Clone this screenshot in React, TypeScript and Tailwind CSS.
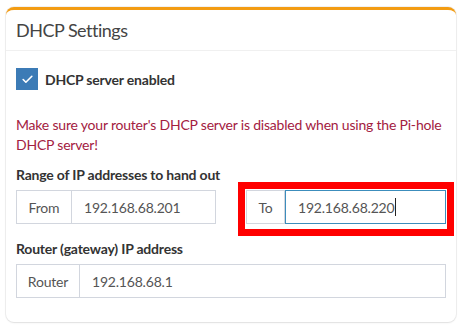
import { Check } from "lucide-react";

const font = { fontFamily: '"Source Sans Pro", Lato, "Noto Sans", sans-serif' };

function Addon({ label, width }: { label: string; width: string }) {
  return (
    <span
      className={`flex items-center justify-center shrink-0 border border-[#d2d6de] bg-white text-[14px] text-[#555] ${width}`}
    >
      {label}
    </span>
  );
}

export default function App() {
  return (
    <div className="w-[467px] h-[336px] bg-white pt-[7px] pl-[6px] tracking-[-0.2px]" style={font}>
      <div className="w-[450px] rounded-[8px] border-t-[3px] border-[#f39c12] bg-white shadow-[0_1px_2px_rgba(0,0,0,0.08),0_0_0_1px_#f2f2f2]">
        <div className="h-[41px] border-b border-[#f0f0f0] px-[10px] flex items-center">
          <h3 className="text-[18px] text-[#444] leading-none tracking-[-0.5px]">DHCP Settings</h3>
        </div>

        <div className="px-[10px] pt-[17px] pb-[24px] text-[14px] text-[#333]">
          <label className="flex items-center gap-[7px] h-[22px]">
            <span className="flex h-[22px] w-[22px] items-center justify-center bg-[#3c7bb6]">
              <Check className="h-[13px] w-[13px] text-white" strokeWidth={3} />
            </span>
            <span className="font-bold">DHCP server enabled</span>
          </label>

          <p className="mt-[25px] leading-[20px] text-[#a3203f]">
            Make sure your router's DHCP server is disabled when using the Pi-hole DHCP server!
          </p>

          <p className="mt-[10px] font-bold leading-[20px]">Range of IP addresses to hand out</p>
          <div className="mt-[5px] grid grid-cols-2 gap-[30px]">
            <div className="flex h-[34px]">
              <Addon label="From" width="w-[56px]" />
              <div className="flex flex-1 items-center border border-l-0 border-[#d2d6de] px-[12px] text-[#555]">
                192.168.68.201
              </div>
            </div>
            <div className="relative">
              <div className="flex h-[34px]">
                <Addon label="To" width="w-[39px]" />
                <div className="flex flex-1 items-center border border-[#3c8dbc] px-[12px] text-[#555]">
                  192.168.68.220
                  <span className="ml-px h-[18px] w-px bg-[#222]" />
                </div>
              </div>
              <div className="absolute -left-[8px] -right-[8px] -top-[8px] -bottom-[12px] border-[7px] border-[#ff0000]" />
            </div>
          </div>

          <p className="mt-[15px] font-bold leading-[20px]">Router (gateway) IP address</p>
          <div className="mt-[5px] flex h-[34px]">
            <Addon label="Router" width="w-[64px]" />
            <div className="flex flex-1 items-center border border-l-0 border-[#d2d6de] px-[12px] text-[#555]">
              192.168.68.1
            </div>
          </div>
        </div>
      </div>
    </div>
  );
}
